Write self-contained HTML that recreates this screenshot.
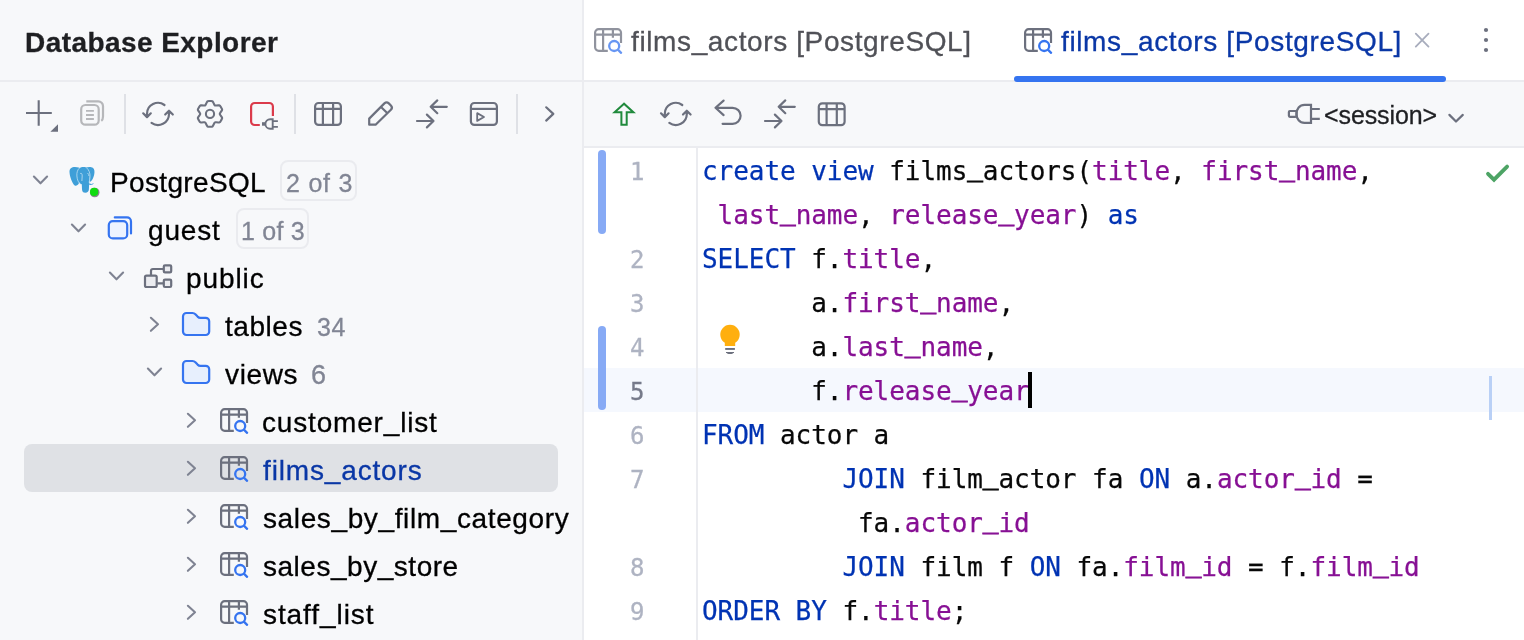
<!DOCTYPE html>
<html lang="en"><head><meta charset="utf-8"><title>Database Explorer</title>
<style>
html,body{margin:0;padding:0}
body{width:1524px;height:640px;overflow:hidden;position:relative;background:#fff;font-family:"Liberation Sans",Arial,sans-serif;color:#000}
.abs{position:absolute}
.ic{position:absolute;overflow:visible}
.layer{position:absolute;left:0;top:0;pointer-events:none}
#left{left:0;top:0;width:582px;height:640px;background:#f7f8fa}
#vsep{left:582px;top:0;width:2px;height:640px;background:#ebecf0}
#lhdr{left:0;top:80px;width:582px;height:2px;background:#ebecf0}
#tabs{left:584px;top:0;width:940px;height:80px;background:#fff}
#tabline{left:584px;top:80px;width:940px;height:2px;background:#ebecf0}
#etool{left:584px;top:82px;width:940px;height:64px;background:#f7f8fa}
#etoolb{left:584px;top:146px;width:940px;height:2px;background:#ebecf0}
#under{left:1013.800px;top:75.600px;width:432.600px;height:6.200px;border-radius:3.100px;background:#3574f0}
#sel{left:24px;top:444px;width:534px;height:48px;border-radius:8px;background:#dfe1e5}
#curline{left:584px;top:368px;width:940px;height:44px;background:#f5f8fe}
#gsep{left:696px;top:148px;width:2px;height:492px;background:#ebecf0}
.chg{left:598px;width:8px;border-radius:4px;background:#87aaf5}
#rbar{left:1489px;top:376px;width:3.200px;height:44px;background:#b9d0f6}
#caret{left:1028px;top:372px;width:4px;height:36px;background:#000}
.t{position:absolute;white-space:pre;line-height:1;will-change:transform}
.t{-webkit-text-stroke:0.300px currentColor}
.badge{position:absolute;box-sizing:border-box;border:2px solid #eaebef;border-radius:8px}
.ln{position:absolute;will-change:transform;font-family:"DejaVu Sans Mono","Liberation Mono",monospace;font-size:24px;color:#aeb3c2;line-height:1;white-space:pre;-webkit-text-stroke:0.300px currentColor}
.code{position:absolute;will-change:transform;left:702px;font-family:"DejaVu Sans Mono","Liberation Mono",monospace;font-size:26px;letter-spacing:-0.052px;-webkit-text-stroke:0.250px currentColor;line-height:44px;height:44px;white-space:pre;color:#080808}
.u{position:relative;top:-4.500px;-webkit-text-stroke:0.900px currentColor}
.v{position:relative;top:-2px}
.k{color:#0033b3}.f{color:#871094}
</style></head><body>
<div id="left" class="abs"></div>
<div id="lhdr" class="abs"></div>
<div id="tabs" class="abs"></div>
<div id="tabline" class="abs"></div>
<div id="etool" class="abs"></div>
<div id="etoolb" class="abs"></div>
<div id="vsep" class="abs"></div>
<div id="under" class="abs"></div>
<div id="sel" class="abs"></div>
<div id="curline" class="abs"></div>
<div id="gsep" class="abs"></div>
<div class="abs chg" style="top:150px;height:84px"></div>
<div class="abs chg" style="top:326px;height:84px"></div>
<div id="rbar" class="abs"></div>

<div class="badge" style="left:279.800px;top:159.600px;width:77.400px;height:41.400px"></div>
<div class="badge" style="left:236px;top:207.600px;width:73.200px;height:41.400px"></div>
<div class="t" id="hdr" style="font-size:28px;font-weight:bold;color:#1e1f22;letter-spacing:0.438px;left:24.60px;top:28.90px">Database Explorer</div>
<div class="t" id="pg" style="font-size:28px;letter-spacing:0.350px;left:109.50px;top:168.80px">PostgreSQL</div>
<div class="t" id="b1" style="font-size:25px;color:#818594;letter-spacing:0.771px;left:285.90px;top:171.30px">2 of 3</div>
<div class="t" id="guest" style="font-size:28px;letter-spacing:0.821px;left:148.00px;top:216.80px">guest</div>
<div class="t" id="b2" style="font-size:25px;color:#818594;letter-spacing:0.211px;left:240.50px;top:219.30px">1 of 3</div>
<div class="t" id="public" style="font-size:28px;letter-spacing:0.908px;left:186.30px;top:264.80px">public</div>
<div class="t" id="tables" style="font-size:28px;letter-spacing:0.557px;left:224.80px;top:312.80px">tables</div>
<div class="t" id="c34" style="font-size:25px;color:#818594;letter-spacing:0.496px;left:316.80px;top:315.00px">34</div>
<div class="t" id="views" style="font-size:28px;letter-spacing:0.647px;left:224.90px;top:360.80px">views</div>
<div class="t" id="c6" style="font-size:27px;color:#818594;letter-spacing:0.000px;left:310.50px;top:362.00px">6</div>
<div class="t" id="cust" style="font-size:28px;letter-spacing:0.828px;left:262.20px;top:408.80px">customer<span class="v">_</span>list</div>
<div class="t" id="fa" style="font-size:28px;color:#0a37a6;letter-spacing:0.849px;left:262.60px;top:456.80px">films<span class="v">_</span>actors</div>
<div class="t" id="sbfc" style="font-size:28px;letter-spacing:0.619px;left:263.30px;top:504.80px">sales<span class="v">_</span>by<span class="v">_</span>film<span class="v">_</span>category</div>
<div class="t" id="sbs" style="font-size:28px;letter-spacing:0.526px;left:263.30px;top:552.80px">sales<span class="v">_</span>by<span class="v">_</span>store</div>
<div class="t" id="sl" style="font-size:28px;letter-spacing:0.920px;left:263.30px;top:600.80px">staff<span class="v">_</span>list</div>
<div class="t" id="tab1" style="font-size:28px;color:#505157;letter-spacing:0.619px;left:631.20px;top:28.40px">films<span class="v">_</span>actors [PostgreSQL]</div>
<div class="t" id="tab2" style="font-size:28px;color:#0a37a6;letter-spacing:0.631px;left:1060.70px;top:28.40px">films<span class="v">_</span>actors [PostgreSQL]</div>
<div class="t" id="sess" style="font-size:25px;color:#1e1f22;letter-spacing:-0.108px;left:1324.30px;top:102.60px">&lt;session&gt;</div>
<div class="ln" style="left:629.600px;top:159.5px;color:#aeb3c2">1</div>
<div class="ln" style="left:629.600px;top:247.5px;color:#aeb3c2">2</div>
<div class="ln" style="left:629.600px;top:291.5px;color:#aeb3c2">3</div>
<div class="ln" style="left:629.600px;top:335.5px;color:#aeb3c2">4</div>
<div class="ln" style="left:629.600px;top:379.5px;color:#767a8a">5</div>
<div class="ln" style="left:629.600px;top:423.5px;color:#aeb3c2">6</div>
<div class="ln" style="left:629.600px;top:467.5px;color:#aeb3c2">7</div>
<div class="ln" style="left:629.600px;top:555.5px;color:#aeb3c2">8</div>
<div class="ln" style="left:629.600px;top:599.5px;color:#aeb3c2">9</div>
<div class="code" style="top:149px"><span class="k">create view</span> films<span class="u">_</span>actors(<span class="f">title</span>, <span class="f">first<span class="u">_</span>name</span>,</div>
<div class="code" style="top:193px"> <span class="f">last<span class="u">_</span>name</span>, <span class="f">release<span class="u">_</span>year</span>) <span class="k">as</span></div>
<div class="code" style="top:237px"><span class="k">SELECT</span> f.<span class="f">title</span>,</div>
<div class="code" style="top:281px">       a.<span class="f">first<span class="u">_</span>name</span>,</div>
<div class="code" style="top:325px">       a.<span class="f">last<span class="u">_</span>name</span>,</div>
<div class="code" style="top:369px">       f.<span class="f">release<span class="u">_</span>year</span></div>
<div class="code" style="top:413px"><span class="k">FROM</span> actor a</div>
<div class="code" style="top:457px">         <span class="k">JOIN</span> film<span class="u">_</span>actor fa <span class="k">ON</span> a.<span class="f">actor<span class="u">_</span>id</span> =</div>
<div class="code" style="top:501px">          fa.<span class="f">actor<span class="u">_</span>id</span></div>
<div class="code" style="top:545px">         <span class="k">JOIN</span> film f <span class="k">ON</span> fa.<span class="f">film<span class="u">_</span>id</span> = f.<span class="f">film<span class="u">_</span>id</span></div>
<div class="code" style="top:589px"><span class="k">ORDER BY</span> f.<span class="f">title</span>;</div>
<div id="caret" class="abs"></div>
<svg class="ic" style="left:30.700000000000003px;top:174px" width="19" height="13" viewBox="-2 -2 19 13" fill="none"><path d="M0.900 0.600L7.500 7.300L14.100 0.600" stroke="#7f8392" stroke-width="2.100" stroke-linecap="round" stroke-linejoin="round"/></svg>
<svg class="ic" style="left:68.7px;top:222px" width="19" height="13" viewBox="-2 -2 19 13" fill="none"><path d="M0.900 0.600L7.500 7.300L14.100 0.600" stroke="#7f8392" stroke-width="2.100" stroke-linecap="round" stroke-linejoin="round"/></svg>
<svg class="ic" style="left:106.7px;top:270px" width="19" height="13" viewBox="-2 -2 19 13" fill="none"><path d="M0.900 0.600L7.500 7.300L14.100 0.600" stroke="#7f8392" stroke-width="2.100" stroke-linecap="round" stroke-linejoin="round"/></svg>
<svg class="ic" style="left:147.6px;top:314.8px" width="13" height="19" viewBox="-2 -2 13 19" fill="none"><path d="M0.900 0.800L8 7.300L0.900 13.800" stroke="#7f8392" stroke-width="2.100" stroke-linecap="round" stroke-linejoin="round"/></svg>
<svg class="ic" style="left:144.7px;top:366px" width="19" height="13" viewBox="-2 -2 19 13" fill="none"><path d="M0.900 0.600L7.500 7.300L14.100 0.600" stroke="#7f8392" stroke-width="2.100" stroke-linecap="round" stroke-linejoin="round"/></svg>
<svg class="ic" style="left:185.4px;top:410.7px" width="13" height="19" viewBox="-2 -2 13 19" fill="none"><path d="M0.900 0.800L8 7.300L0.900 13.800" stroke="#7f8392" stroke-width="2.100" stroke-linecap="round" stroke-linejoin="round"/></svg>
<svg class="ic" style="left:185.4px;top:458.7px" width="13" height="19" viewBox="-2 -2 13 19" fill="none"><path d="M0.900 0.800L8 7.300L0.900 13.800" stroke="#7f8392" stroke-width="2.100" stroke-linecap="round" stroke-linejoin="round"/></svg>
<svg class="ic" style="left:185.4px;top:506.7px" width="13" height="19" viewBox="-2 -2 13 19" fill="none"><path d="M0.900 0.800L8 7.300L0.900 13.800" stroke="#7f8392" stroke-width="2.100" stroke-linecap="round" stroke-linejoin="round"/></svg>
<svg class="ic" style="left:185.4px;top:554.7px" width="13" height="19" viewBox="-2 -2 13 19" fill="none"><path d="M0.900 0.800L8 7.300L0.900 13.800" stroke="#7f8392" stroke-width="2.100" stroke-linecap="round" stroke-linejoin="round"/></svg>
<svg class="ic" style="left:185.4px;top:602.7px" width="13" height="19" viewBox="-2 -2 13 19" fill="none"><path d="M0.900 0.800L8 7.300L0.900 13.800" stroke="#7f8392" stroke-width="2.100" stroke-linecap="round" stroke-linejoin="round"/></svg>
<svg class="ic" style="left:220px;top:408px" width="30" height="28" viewBox="0 0 30 28" fill="none">
<path d="M13.800 22.800H4.700A3.600 3.600 0 0 1 1.100 19.200V4.700A3.600 3.600 0 0 1 4.700 1.100H23.400A3.600 3.600 0 0 1 27 4.700V15M1.100 6.700H27M9.100 1.100V22.800M18.900 1.100V9.800" stroke="#6c707e" stroke-width="2.200"/>
<circle cx="20.200" cy="18" r="5" stroke="#3574f0" stroke-width="2.300"/>
<path d="M23.900 21.700L27.100 24.800" stroke="#3574f0" stroke-width="2.300" stroke-linecap="round"/>
</svg>
<svg class="ic" style="left:220px;top:456px" width="30" height="28" viewBox="0 0 30 28" fill="none">
<path d="M13.800 22.800H4.700A3.600 3.600 0 0 1 1.100 19.200V4.700A3.600 3.600 0 0 1 4.700 1.100H23.400A3.600 3.600 0 0 1 27 4.700V15M1.100 6.700H27M9.100 1.100V22.800M18.900 1.100V9.800" stroke="#6c707e" stroke-width="2.200"/>
<circle cx="20.200" cy="18" r="5" stroke="#3574f0" stroke-width="2.300"/>
<path d="M23.900 21.700L27.100 24.800" stroke="#3574f0" stroke-width="2.300" stroke-linecap="round"/>
</svg>
<svg class="ic" style="left:220px;top:504px" width="30" height="28" viewBox="0 0 30 28" fill="none">
<path d="M13.800 22.800H4.700A3.600 3.600 0 0 1 1.100 19.200V4.700A3.600 3.600 0 0 1 4.700 1.100H23.400A3.600 3.600 0 0 1 27 4.700V15M1.100 6.700H27M9.100 1.100V22.800M18.900 1.100V9.800" stroke="#6c707e" stroke-width="2.200"/>
<circle cx="20.200" cy="18" r="5" stroke="#3574f0" stroke-width="2.300"/>
<path d="M23.900 21.700L27.100 24.800" stroke="#3574f0" stroke-width="2.300" stroke-linecap="round"/>
</svg>
<svg class="ic" style="left:220px;top:552px" width="30" height="28" viewBox="0 0 30 28" fill="none">
<path d="M13.800 22.800H4.700A3.600 3.600 0 0 1 1.100 19.200V4.700A3.600 3.600 0 0 1 4.700 1.100H23.400A3.600 3.600 0 0 1 27 4.700V15M1.100 6.700H27M9.100 1.100V22.800M18.900 1.100V9.800" stroke="#6c707e" stroke-width="2.200"/>
<circle cx="20.200" cy="18" r="5" stroke="#3574f0" stroke-width="2.300"/>
<path d="M23.900 21.700L27.100 24.800" stroke="#3574f0" stroke-width="2.300" stroke-linecap="round"/>
</svg>
<svg class="ic" style="left:220px;top:600px" width="30" height="28" viewBox="0 0 30 28" fill="none">
<path d="M13.800 22.800H4.700A3.600 3.600 0 0 1 1.100 19.200V4.700A3.600 3.600 0 0 1 4.700 1.100H23.400A3.600 3.600 0 0 1 27 4.700V15M1.100 6.700H27M9.100 1.100V22.800M18.900 1.100V9.800" stroke="#6c707e" stroke-width="2.200"/>
<circle cx="20.200" cy="18" r="5" stroke="#3574f0" stroke-width="2.300"/>
<path d="M23.900 21.700L27.100 24.800" stroke="#3574f0" stroke-width="2.300" stroke-linecap="round"/>
</svg>
<svg class="ic" style="opacity:.75;left:594px;top:28px" width="30" height="28" viewBox="0 0 30 28" fill="none">
<path d="M13.800 22.800H4.700A3.600 3.600 0 0 1 1.100 19.200V4.700A3.600 3.600 0 0 1 4.700 1.100H23.400A3.600 3.600 0 0 1 27 4.700V15M1.100 6.700H27M9.100 1.100V22.800M18.900 1.100V9.800" stroke="#6c707e" stroke-width="2.200"/>
<circle cx="20.200" cy="18" r="5" stroke="#3574f0" stroke-width="2.300"/>
<path d="M23.900 21.700L27.100 24.800" stroke="#3574f0" stroke-width="2.300" stroke-linecap="round"/>
</svg>
<svg class="ic" style="left:1023.8px;top:28px" width="30" height="28" viewBox="0 0 30 28" fill="none">
<path d="M13.800 22.800H4.700A3.600 3.600 0 0 1 1.100 19.200V4.700A3.600 3.600 0 0 1 4.700 1.100H23.400A3.600 3.600 0 0 1 27 4.700V15M1.100 6.700H27M9.100 1.100V22.800M18.900 1.100V9.800" stroke="#6c707e" stroke-width="2.200"/>
<circle cx="20.200" cy="18" r="5" stroke="#3574f0" stroke-width="2.300"/>
<path d="M23.900 21.700L27.100 24.800" stroke="#3574f0" stroke-width="2.300" stroke-linecap="round"/>
</svg>
<svg class="layer" width="1524" height="640" viewBox="0 0 1524 640">
<path d="M26 113H51.800M38.700 100.300V125.700" stroke="#6c707e" stroke-width="2.100" fill="none"/>
<path d="M58 124.300V131.800H50.400Z" fill="#6c707e"/>
<rect x="81.200" y="105" width="17.500" height="19.700" rx="4.200" stroke="#b6b7ba" stroke-width="2.200" fill="none"/>
<path d="M86.300 101.300H98.300A4.700 4.700 0 0 1 103 106V116.500Q103 119.600 101.300 120.800" stroke="#b6b7ba" stroke-width="2.200" fill="none"/>
<path d="M86 110.900H93.900M86 115H93.900M86 119H93.900" stroke="#b6b7ba" stroke-width="1.800" fill="none"/>
<path d="M164.47 105.00A11.0 11.0 0 0 0 147.00 113.90V116.90M143.20 113.30L147.00 117.10L150.80 113.30M151.53 122.80A11.0 11.0 0 0 0 169.00 113.90V110.90M165.20 114.50L169.00 110.70L172.80 114.50" stroke="#6c707e" stroke-width="2.200" stroke-linecap="round" stroke-linejoin="round" fill="none"/>
<path d="M208.89 101.06L211.11 101.06L212.18 101.18L212.67 101.49L213.23 102.39L214.14 104.35L214.68 105.23L215.17 105.51L216.20 105.54L218.36 105.35L219.41 105.38L219.92 105.66L220.56 106.52L221.67 108.44L222.10 109.43L222.08 110.01L221.58 110.94L220.34 112.71L219.85 113.62L219.85 114.18L220.34 115.09L221.58 116.86L222.08 117.79L222.10 118.37L221.67 119.36L220.56 121.28L219.92 122.14L219.41 122.42L218.36 122.45L216.20 122.26L215.17 122.29L214.68 122.57L214.14 123.45L213.23 125.41L212.67 126.31L212.18 126.62L211.11 126.74L208.89 126.74L207.82 126.62L207.33 126.31L206.77 125.41L205.86 123.45L205.32 122.57L204.83 122.29L203.80 122.26L201.64 122.45L200.59 122.42L200.08 122.14L199.44 121.28L198.33 119.36L197.90 118.37L197.92 117.79L198.42 116.86L199.66 115.09L200.15 114.18L200.15 113.62L199.66 112.71L198.42 110.94L197.92 110.01L197.90 109.43L198.33 108.44L199.44 106.52L200.08 105.66L200.59 105.38L201.64 105.35L203.80 105.54L204.83 105.51L205.32 105.23L205.86 104.35L206.77 102.39L207.33 101.49L207.82 101.18Z" stroke="#6c707e" stroke-width="2.100" stroke-linejoin="round" fill="none"/><circle cx="210" cy="113.9" r="4.100" stroke="#6c707e" stroke-width="2.100" fill="none"/>
<path d="M259.800 125H254.700A3.600 3.600 0 0 1 251.100 121.400V106.600A3.600 3.600 0 0 1 254.700 103H269.300A3.600 3.600 0 0 1 272.900 106.600V116" stroke="#db3b4b" stroke-width="2.200" fill="none"/>
<path d="M272.700 119.200H270.200A4.800 4.800 0 0 0 270.200 128.800H272.700ZM272.700 121.100H277.900M272.700 126.900H277.900" stroke="#6c707e" stroke-width="1.900" fill="none"/>
<rect x="262" y="122.200" width="3" height="3.500" fill="#6c707e"/>
<rect x="315.1" y="103" width="25.8" height="21.9" rx="3.500" stroke="#6c707e" stroke-width="2.200" fill="none"/><path d="M315.1 108.9H340.90000000000003M322.90000000000003 103V124.9M333.1 103V124.9" stroke="#6c707e" stroke-width="2.200" fill="none"/>
<path d="M369.200 124.700V118.600L384.400 103.400Q386.600 101.300 388.800 103.400L390.900 105.500Q393 107.700 390.900 109.800L375.600 124.700ZM381 107L387.200 113" stroke="#6c707e" stroke-width="2.200" stroke-linejoin="round" fill="none"/>
<path d="M430.7 106.8H446.8M437.3 100.39999999999999L430.7 106.8L437.3 113.2M417 121.0H433.5M426.9 114.6L433.5 121.0L426.9 127.4" stroke="#6c707e" stroke-width="2.200" stroke-linecap="round" stroke-linejoin="round" fill="none"/>
<rect x="470.900" y="103" width="26" height="21.900" rx="3.500" stroke="#6c707e" stroke-width="2.200" fill="none"/>
<path d="M470.900 108.900H496.900" stroke="#6c707e" stroke-width="2.200" fill="none"/>
<path d="M477.200 113.100V120.900L484 117Z" stroke="#6c707e" stroke-width="1.800" stroke-linejoin="round" fill="none"/>
<path d="M546.200 107.300L553.300 113.900L546.200 120.600" stroke="#6c707e" stroke-width="2.200" stroke-linecap="round" stroke-linejoin="round" fill="none"/>
<rect x="124" y="94" width="2" height="40" fill="#dfe1e6"/>
<rect x="294" y="94" width="2" height="40" fill="#dfe1e6"/>
<rect x="516" y="94" width="2" height="40" fill="#dfe1e6"/>
<path d="M624 103.700L614.600 112.300H621.400V124.700H626.700V112.300H633.400Z" stroke="#208a3c" stroke-width="2" stroke-linejoin="miter" fill="none"/>
<path d="M682.27 105.00A11.0 11.0 0 0 0 664.80 113.90V116.90M661.00 113.30L664.80 117.10L668.60 113.30M669.33 122.80A11.0 11.0 0 0 0 686.80 113.90V110.90M683.00 114.50L686.80 110.70L690.60 114.50" stroke="#6c707e" stroke-width="2.200" stroke-linecap="round" stroke-linejoin="round" fill="none"/>
<path d="M723.600 100.600L715.500 107.800L723.600 115.100M715.500 107.800H732.600A8 8 0 0 1 732.600 123.800H722.600" stroke="#6c707e" stroke-width="2.200" stroke-linecap="round" stroke-linejoin="round" fill="none"/>
<path d="M778.7 106.8H794.8M785.3 100.39999999999999L778.7 106.8L785.3 113.2M765 121.0H781.5M774.9 114.6L781.5 121.0L774.9 127.4" stroke="#6c707e" stroke-width="2.200" stroke-linecap="round" stroke-linejoin="round" fill="none"/>
<rect x="818.8" y="103.3" width="25.8" height="21.9" rx="3.500" stroke="#6c707e" stroke-width="2.200" fill="none"/><path d="M818.8 109.2H844.5999999999999M826.5999999999999 103.3V125.19999999999999M836.8 103.3V125.19999999999999" stroke="#6c707e" stroke-width="2.200" fill="none"/>
<path d="M1311 104.800H1304.500C1299.500 104.800 1296.500 109 1296.500 113.900C1296.500 118.800 1299.500 122.900 1304.500 122.900H1311ZM1311 109H1319.800M1311 118.900H1319.800" stroke="#6c707e" stroke-width="2.200" fill="none"/>
<rect x="1288.900" y="111" width="7.600" height="5.800" rx="1" stroke="#6c707e" stroke-width="2.200" fill="none"/>
<path d="M1449.400 114.900L1456 121.500L1462.800 114.900" stroke="#6c707e" stroke-width="2.200" stroke-linecap="round" stroke-linejoin="round" fill="none"/>
<path d="M1415.800 33.600L1428.500 46.600M1428.500 33.600L1415.800 46.600" stroke="#a8adbd" stroke-width="1.800" stroke-linecap="round" fill="none"/>
<circle cx="1486" cy="30" r="2.100" fill="#6c707e"/>
<circle cx="1486" cy="40" r="2.100" fill="#6c707e"/>
<circle cx="1486" cy="50" r="2.100" fill="#6c707e"/>
<path d="M1488 173.800L1494 179.700L1507.100 166.600" stroke="#4da465" stroke-width="3.800" stroke-linecap="round" stroke-linejoin="miter" fill="none"/>
<path d="M724.800 345.900V342.700A9.700 9.700 0 1 1 735.200 342.700V345.900Z" fill="#ffaf0f"/>
<rect x="725.200" y="348" width="9.700" height="1.900" fill="#6c707e"/>
<path d="M726 352.100H734V352.300Q733 353.900 731.500 353.900H728.500Q727 353.900 726 352.300Z" fill="#6c707e"/>
<g>
<path d="M69.500 172C69.300 168.500 71.500 166.900 75 166.900C78 166.900 79.800 167.600 80.300 168.800L79 183C78 185.200 76.200 186.300 74.700 185.600C72 183 69.700 176.500 69.500 172Z" fill="#3f9fd8"/>
<path d="M86 167.600C88 166.700 91.300 166.700 92.800 167.800C94.700 169.200 94.800 172 94.100 175C93.300 178.300 92 180.800 90.300 181.800L89 181C90.500 177 90 171 86 167.600Z" fill="#3f9fd8"/>
<path d="M76.800 173C76.600 169 79.500 166.900 83.500 166.900C87.800 166.900 90.200 169.300 90.100 173.500L89.200 183L88.900 189.300C88.800 191.600 87.500 192.800 85.400 192.800C83.200 192.800 82.100 191.500 82 189.200L81.800 184.300C78.800 183.600 77 179.500 76.800 173Z" fill="#3f9fd8"/>
<path d="M89.300 183.300C91 184.200 92.800 184 93.900 183.100C93.400 184.800 91 185.400 89.300 184.900Z" fill="#3f9fd8"/>
<path d="M79.800 167.800C77.500 169.500 76.600 172.500 76.900 176C77.200 179.800 78.400 183 80.800 184.300M86.200 167.500C89 169.800 90.300 173 90 177C89.900 179 89.500 181 89.100 182.500M80.200 173.500C81.500 172.800 82.300 174 82.200 176L81.900 181M87.500 173.500C88.500 173.200 89 174.200 88.800 176" stroke="#d3e9f7" stroke-width="0.700" fill="none"/>
</g>
<circle cx="94.700" cy="192.500" r="4.800" fill="#8b8490"/>
<circle cx="94.100" cy="191.900" r="4.100" fill="#0fdc0f"/>
<path d="M114.800 217.400H127A4 4 0 0 1 131 221.400V233.500" stroke="#3574f0" stroke-width="2.200" stroke-linecap="round" fill="none"/>
<rect x="108.800" y="221.100" width="18.400" height="17.300" rx="4" stroke="#3574f0" stroke-width="2.200" fill="#edf3ff"/>
<rect x="145" y="275.600" width="11.700" height="11.400" rx="1.500" stroke="#6c707e" stroke-width="2.200" fill="#ebecf0"/>
<rect x="163.800" y="265.400" width="7.400" height="7" rx="1.200" stroke="#6c707e" stroke-width="2.200" fill="#ebecf0"/>
<rect x="163.800" y="279.600" width="7.400" height="7.400" rx="1.200" stroke="#6c707e" stroke-width="2.200" fill="#ebecf0"/>
<path d="M151 275V271A2 2 0 0 1 153 269H163M157.300 283.300H163" stroke="#6c707e" stroke-width="2.200" fill="none"/>
<path d="M183 316.5A3.500 3.500 0 0 1 186.5 313H192.5Q194.2 313 195.4 314.2L197.6 316.6Q198.8 317.8 200.5 317.8H205.7A3.500 3.500 0 0 1 209.2 321.3V331.5A3.500 3.500 0 0 1 205.7 335H186.5A3.500 3.500 0 0 1 183 331.5Z" stroke="#3574f0" stroke-width="2.200" stroke-linejoin="round" fill="#e7effd"/>
<path d="M183 364.5A3.500 3.500 0 0 1 186.5 361H192.5Q194.2 361 195.4 362.2L197.6 364.6Q198.8 365.8 200.5 365.8H205.7A3.500 3.500 0 0 1 209.2 369.3V379.5A3.500 3.500 0 0 1 205.7 383H186.5A3.500 3.500 0 0 1 183 379.5Z" stroke="#3574f0" stroke-width="2.200" stroke-linejoin="round" fill="#e7effd"/>
</svg>
</body></html>
